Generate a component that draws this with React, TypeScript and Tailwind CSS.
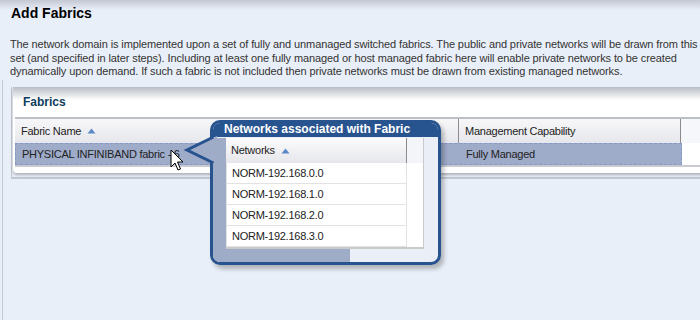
const SANS = "font-['Liberation_Sans','Arial',sans-serif]"

const networks = ['NORM-192.168.0.0', 'NORM-192.168.1.0', 'NORM-192.168.2.0', 'NORM-192.168.3.0']

function SortArrow() {
  return (
    <svg width="9" height="6" viewBox="0 0 9 6" className="ml-[6px] inline-block">
      <path d="M4.5 0.5 L8.5 5.5 L0.5 5.5 Z" fill="#5b88c6" />
    </svg>
  )
}

function Cursor() {
  return (
    <svg
      width="14"
      height="24"
      viewBox="0 0 14 24"
      className="absolute left-[170px] top-[149px]"
    >
      <path
        d="M1 1 L1 18 L5 14 L8 21 L10.5 20 L7.5 13 L13 13 Z"
        fill="#ffffff"
        stroke="#000000"
        strokeWidth="1"
        strokeLinejoin="miter"
      />
    </svg>
  )
}

function NetworksCallout() {
  return (
    <>
      {/* bubble body */}
      <div className="absolute left-[210px] top-[120px] flex h-[145px] w-[231px] flex-col overflow-hidden rounded-[10px] border-[3px] border-[#27538f] bg-[#e9eef7] shadow-[3px_4px_4px_rgba(0,0,0,0.25)]">
        <div className="h-[14px] shrink-0 bg-[#27538f] pl-[11px] font-['Liberation_Sans','Arial',sans-serif] text-[12px] font-bold leading-[12px] text-white">
          Networks associated with Fabric
        </div>
        <div className="flex shrink-0 pt-px">
          <div className="w-[13px] shrink-0 bg-[#9eacc8]" />
          <div className={`w-[198px] border-r border-b-2 border-[#cacaca] bg-white ${SANS} text-[11px] tracking-[-0.25px] text-[#222]`}>
            <div className="flex h-[25px] bg-[linear-gradient(to_bottom,#fbfbfc,#e6e7ec)]">
              <div className="flex w-[181px] items-center border-r border-[#8c8c8c] pl-[5px]">
                Networks
                <SortArrow />
              </div>
              <div className="flex-1 bg-[#f4f5f8]" />
            </div>
            {networks.map((name) => (
              <div key={name} className="flex h-[21px]">
                <div className="flex w-[181px] items-center border border-t-0 border-[#e2e2e2] pl-[5px]">
                  {name}
                </div>
                <div className="flex-1" />
              </div>
            ))}
          </div>
          <div className="flex-1" />
        </div>
        <div className="flex flex-1">
          <div className="w-[137px] bg-[#9eacc8]" />
          <div className="flex-1" />
        </div>
      </div>

      {/* pointer */}
      <svg
        width="34"
        height="32"
        viewBox="0 0 34 32"
        className="absolute left-[183px] top-[134px]"
      >
        <path d="M34 2 L4 16 L34 30 Z" fill="#9eacc8" />
        <path d="M30.5 3 L4 16 L30.5 29" fill="none" stroke="#27538f" strokeWidth="3" strokeLinejoin="miter" />
      </svg>
    </>
  )
}

export default function App() {
  return (
    <div className="relative h-[320px] w-[700px] overflow-hidden bg-[#e9eff8] text-[#222]">
      {/* page header */}
      <div className="h-[80px] bg-[linear-gradient(to_bottom,#c3c8d2,#e9eff8_10px)] px-[10px] pt-[3px]">
        <h1 className={`${SANS} pl-[1px] text-[14px] font-bold leading-[20px] text-black`}>
          Add Fabrics
        </h1>
        <div className={`mt-[15px] ${SANS} text-[11px] leading-[13.5px] tracking-[-0.11px] text-[#333] whitespace-nowrap`}>
          <div>The network domain is implemented upon a set of fully and unmanaged switched fabrics. The public and private networks will be drawn from this</div>
          <div>set (and specified in later steps). Including at least one fully managed or host managed fabric here will enable private networks to be created</div>
          <div>dynamically upon demand. If such a fabric is not included then private networks must be drawn from existing managed networks.</div>
        </div>
      </div>

      {/* content area */}
      <div className="ml-[2px] h-[240px] border-l border-[#c5c9d1] pt-[7px] pl-[8px]">
        <div className="h-[92px] w-[700px] border-b-[2px] border-l border-[#c3c6cd] bg-[#e9eff8]">
          <div className="ml-[1px] h-[86px] rounded-bl-[4px] bg-white shadow-[0_2px_3px_rgba(0,0,0,0.25)]">
            <div className={`flex h-[30px] items-center bg-[linear-gradient(to_bottom,#b9bdc6,#ffffff_13px)] pl-[10px] ${SANS} text-[12px] font-bold text-[#0e3d5e]`}>
              Fabrics
            </div>
            <div className={`ml-[2px] border-t-2 border-[#bcbfc6] ${SANS} text-[11px] tracking-[-0.25px] text-[#222]`}>
              <div className="flex h-[24px] bg-[linear-gradient(to_bottom,#f7f7f9,#e6e7ec)]">
                <div className="flex w-[444px] items-center border-r border-[#8c8c8c] pl-[6px]">
                  Fabric Name
                  <SortArrow />
                </div>
                <div className="flex w-[222px] items-center border-r border-[#8c8c8c] pl-[6px]">
                  Management Capability
                </div>
                <div className="flex-1 bg-[#f6f7fa]" />
              </div>
              <div className="flex h-[24px] border-b-2 border-[#c9cbd1]">
                <div className="flex w-[667px] items-center border border-dashed border-[#8599c8] bg-[#9eabc9]">
                  <div className="w-[444px] pl-[6px]">PHYSICAL INFINIBAND fabric - 6</div>
                  <div className="pl-[6px]">Fully Managed</div>
                </div>
                <div className="flex-1" />
              </div>
            </div>
          </div>
        </div>
      </div>

      <Cursor />
      <NetworksCallout />
    </div>
  )
}
